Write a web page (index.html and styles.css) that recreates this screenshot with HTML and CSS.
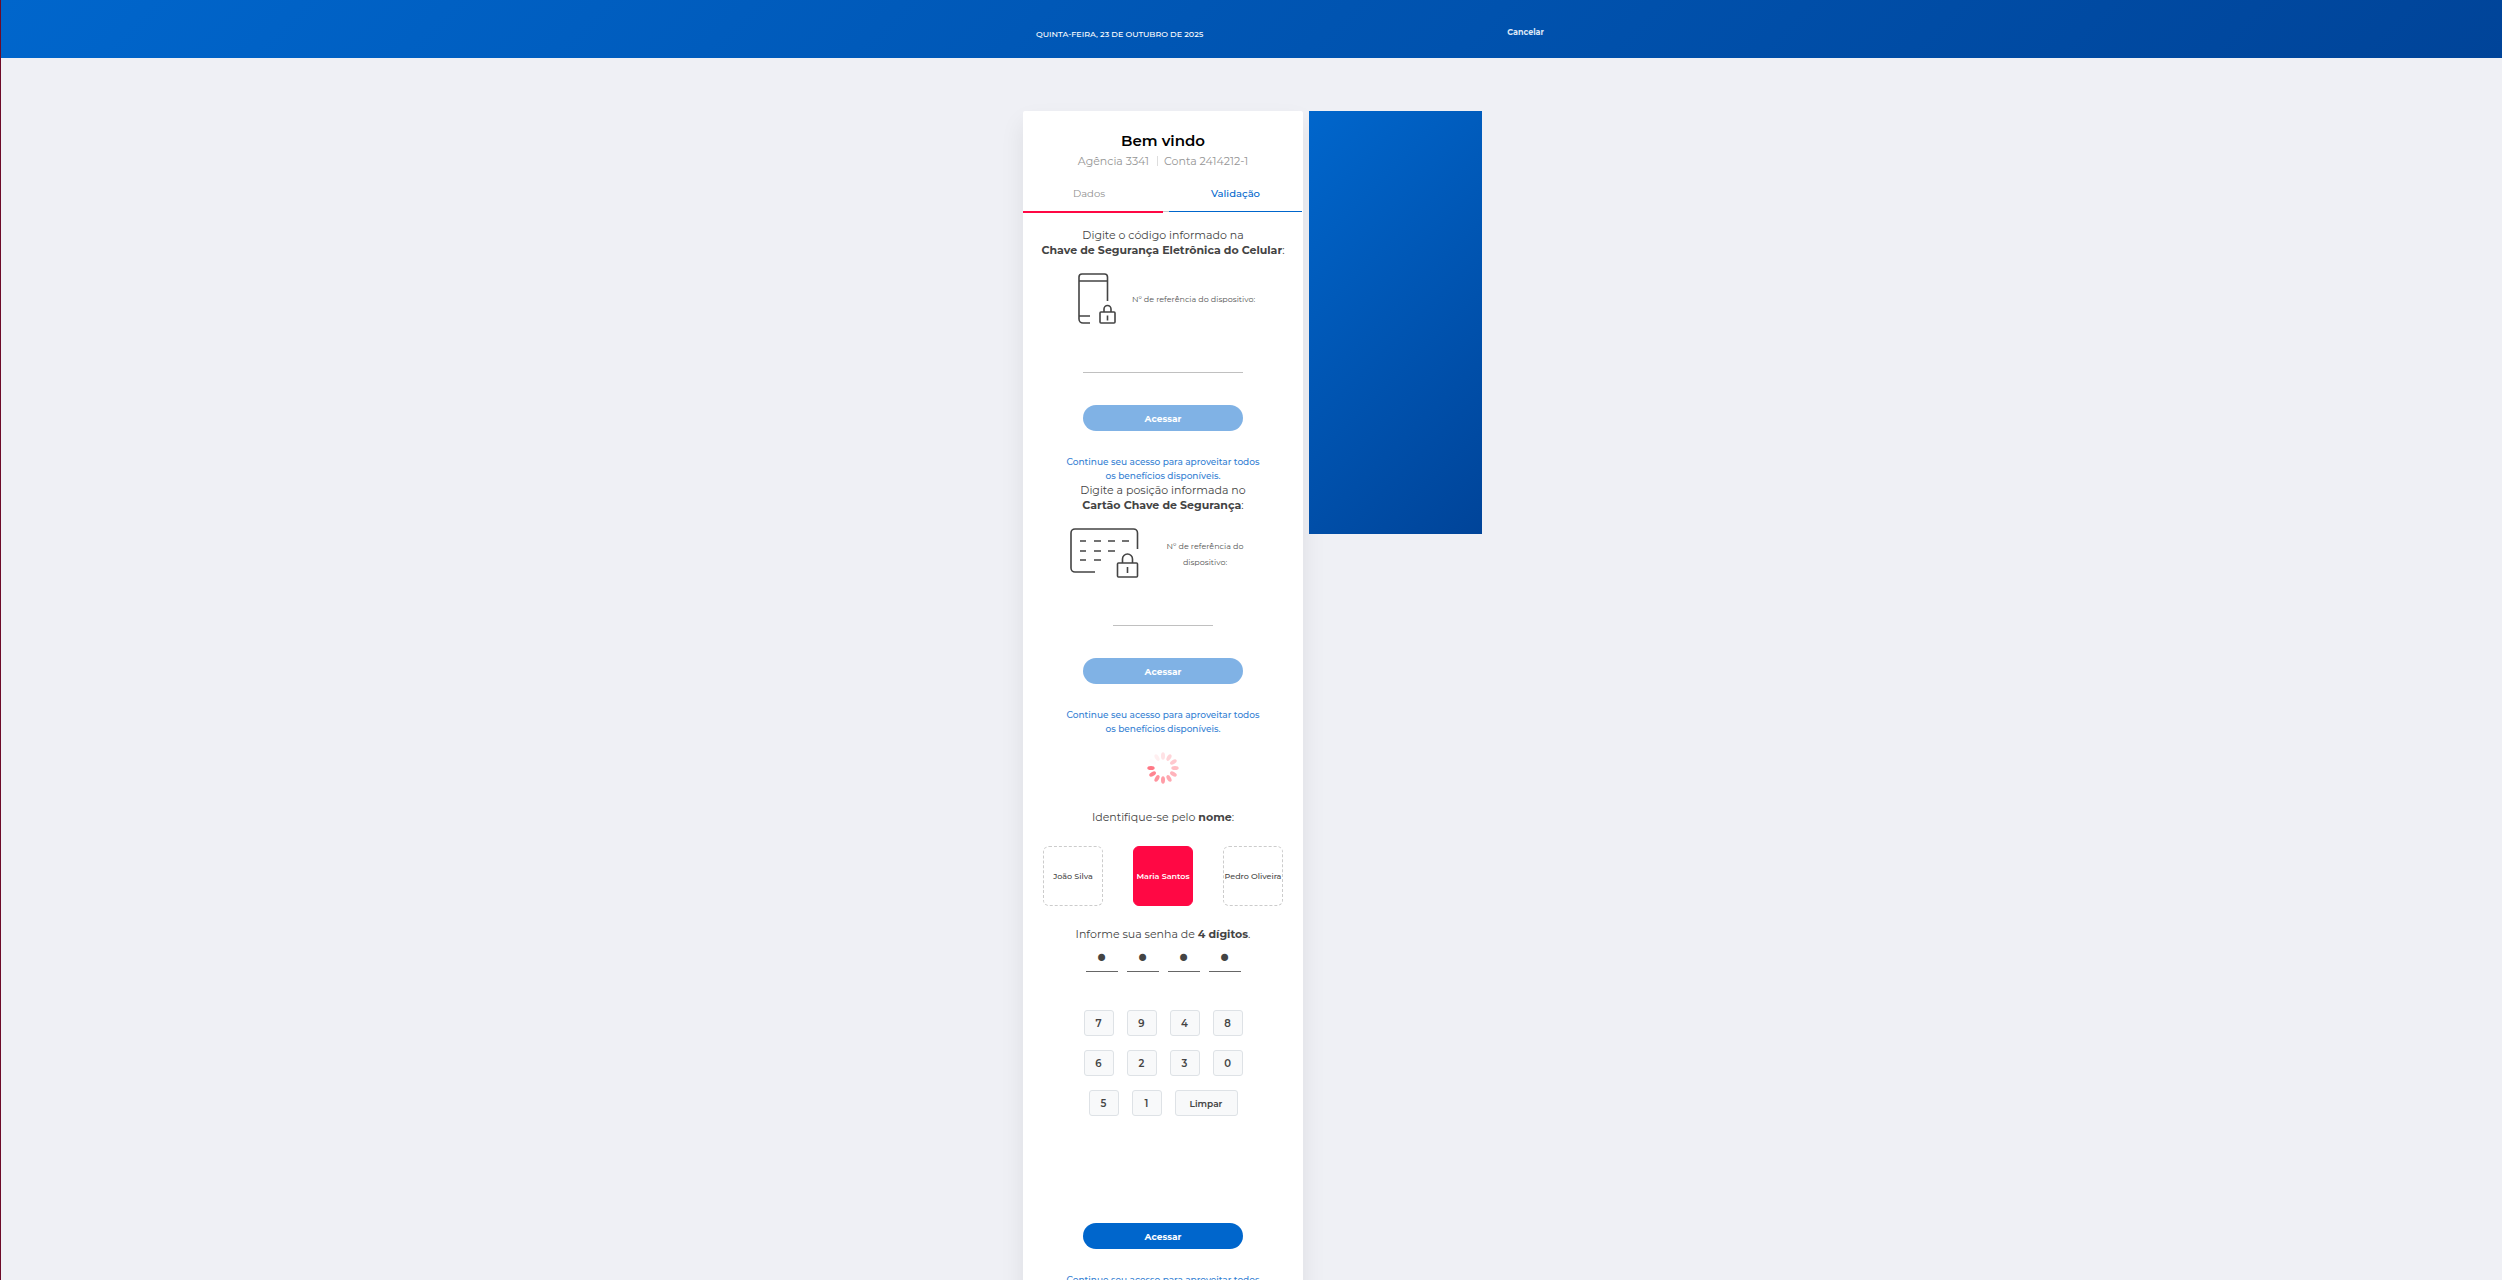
FILE: index.html
```html
<!DOCTYPE html>
<html lang="pt-BR">
<head>
<meta charset="utf-8">
<title>Validação de acesso</title>
<link rel="stylesheet" href="styles.css">
</head>
<body>
<header class="topbar">
  <div class="topbar-inner">
    <span class="date">QUINTA-FEIRA, 23 DE OUTUBRO DE 2025</span>
    <a class="cancel" href="#">Cancelar</a>
  </div>
</header>
<main class="page">
  <section class="card">
    <h1 class="title">Bem vindo</h1>
    <p class="account"><span>Agência 3341</span><span class="conta">Conta 2414212-1</span></p>
    <nav class="tabs">
      <a class="tab tab-done" href="#">Dados</a>
      <a class="tab tab-current" href="#">Validação</a>
    </nav>

    <form class="step">
      <p class="lead">Digite o código informado na<br><strong>Chave de Segurança Eletrônica do Celular</strong>:</p>
      <div class="device">
        <svg class="phone" width="40" height="54" viewBox="0 0 40 54" fill="none" stroke="#444" stroke-width="1.6">
          <path d="M30.500 29V5a3 3 0 0 0-3-3H5a3 3 0 0 0-3 3v42a4 4 0 0 0 4 4h7M2 9h28.500M2 44h11"/>
          <rect x="23" y="40" width="15" height="11" rx="1"/><path d="M27 40v-3a3.500 3.500 0 0 1 7 0v3M30.500 43.500v5"/>
        </svg>
        <label for="token">Nº de referência do dispositivo:</label>
      </div>
      <input class="field" id="token" type="text">
      <button class="submit" type="button" disabled>Acessar</button>
      <p class="hint">Continue seu acesso para aproveitar todos<br>os benefícios disponíveis.</p>
    </form>

    <form class="step step-card">
      <p class="lead">Digite a posição informada no<br><strong>Cartão Chave de Segurança</strong>:</p>
      <div class="device">
        <svg class="keycard" width="70" height="54" viewBox="0 0 70 54" fill="none" stroke="#444" stroke-width="1.6">
          <path d="M67.500 22V6a4 4 0 0 0-4-4H5a4 4 0 0 0-4 4v35a4 4 0 0 0 4 4h20M10 14h6M24 14h7M38 14h7M52 14h7M10 24h6M24 24h7M38 24h7M10 33h6M24 33h7"/>
          <rect x="47.500" y="36" width="20" height="14" rx="1"/><path d="M52.500 36v-4a5 5 0 0 1 10 0v4M57.500 40v6"/>
        </svg>
        <label for="position">Nº de referência do<br>dispositivo:</label>
      </div>
      <input class="field field-short" id="position" type="text">
      <button class="submit" type="button" disabled>Acessar</button>
      <p class="hint">Continue seu acesso para aproveitar todos<br>os benefícios disponíveis.</p>
    </form>

    <svg class="spinner" width="32" height="32" viewBox="-16 -16 32 32" fill="#ff4a5c">
      <ellipse cx="-12" rx="3.700" ry="2" opacity=".75"/>
      <ellipse cx="-12" rx="3.700" ry="2" opacity=".68" transform="rotate(-30)"/>
      <ellipse cx="-12" rx="3.700" ry="2" opacity=".6" transform="rotate(-60)"/>
      <ellipse cx="-12" rx="3.700" ry="2" opacity=".54" transform="rotate(-90)"/>
      <ellipse cx="-12" rx="3.700" ry="2" opacity=".48" transform="rotate(-120)"/>
      <ellipse cx="-12" rx="3.700" ry="2" opacity=".42" transform="rotate(-150)"/>
      <ellipse cx="-12" rx="3.700" ry="2" opacity=".36" transform="rotate(180)"/>
      <ellipse cx="-12" rx="3.700" ry="2" opacity=".3" transform="rotate(150)"/>
      <ellipse cx="-12" rx="3.700" ry="2" opacity=".24" transform="rotate(120)"/>
      <ellipse cx="-12" rx="3.700" ry="2" opacity=".16" transform="rotate(90)"/>
      <ellipse cx="-12" rx="3.700" ry="2" opacity=".09" transform="rotate(60)"/>
      <ellipse cx="-12" rx="3.700" ry="2" opacity=".02" transform="rotate(30)"/>
    </svg>

    <form class="step step-password">
      <p class="lead">Identifique-se pelo <strong>nome</strong>:</p>
      <div class="people">
        <button class="person" type="button">João Silva</button>
        <button class="person person-on" type="button">Maria Santos</button>
        <button class="person" type="button">Pedro Oliveira</button>
      </div>
      <p class="lead">Informe sua senha de <strong>4 dígitos</strong>.</p>
      <div class="digits">
        <input class="digit" type="password" value="7" maxlength="1" aria-label="Dígito 1">
        <input class="digit" type="password" value="7" maxlength="1" aria-label="Dígito 2">
        <input class="digit" type="password" value="7" maxlength="1" aria-label="Dígito 3">
        <input class="digit" type="password" value="7" maxlength="1" aria-label="Dígito 4">
      </div>
      <div class="keypad">
        <button class="key" type="button">7</button><button class="key" type="button">9</button><button class="key" type="button">4</button><button class="key" type="button">8</button>
        <button class="key" type="button">6</button><button class="key" type="button">2</button><button class="key" type="button">3</button><button class="key" type="button">0</button>
        <button class="key" type="button">5</button><button class="key" type="button">1</button><button class="key key-clear" type="button">Limpar</button>
      </div>
      <button class="submit" type="button">Acessar</button>
      <p class="hint">Continue seu acesso para aproveitar todos<br>os benefícios disponíveis.</p>
    </form>
  </section>
  <aside class="banner"></aside>
</main>
</body>
</html>
```
FILE: styles.css
```css
* { box-sizing: border-box; }
html { background: #eff0f5; }
body {
  margin: 0;
  border-left: 1px solid #6d0a28;
  font-family: Montserrat, Inter, sans-serif;
  font-size: 11px;
  color: #444;
}
p, h1 { margin: 0; }
a { text-decoration: none; }
button, input { font: inherit; color: inherit; padding: 0; }
strong { font-weight: 700; }

.topbar { background: linear-gradient(135deg, #0066cc, #004499); color: #fff; }
.topbar-inner {
  display: flex;
  justify-content: space-between;
  align-items: flex-start;
  max-width: 585px;
  min-height: 58px;
  margin: 0 auto;
  padding: 24px 0 12px 77px;
  font-size: 8px;
  line-height: 16px;
}
.date { padding-top: 2px; font-weight: 500; }
.cancel { color: #dbe7f6; font-weight: 700; }

.page {
  display: flex;
  justify-content: center;
  align-items: flex-start;
  gap: 6px;
  padding: 53px 0 0 2px;
}
.card {
  width: 280px;
  padding: 20px 0 40px;
  border-radius: 2px;
  background: #fff;
  box-shadow: 0 12px 24px rgba(0, 0, 0, .08);
  text-align: center;
}
.banner {
  position: relative;
  width: 173px;
  height: 423px;
  background: linear-gradient(135deg, #0066cc, #004499);
}

.title { font-size: 15px; line-height: 20px; font-weight: 600; color: #000; }
.account {
  display: flex;
  justify-content: center;
  gap: 8px;
  font-size: 11px;
  line-height: 20px;
  color: #959595;
}
.conta { display: flex; align-items: center; gap: 6px; }
.conta::before { content: ""; width: 1px; height: 10px; background: #ddd; }

.tabs {
  display: grid;
  grid-template-columns: 140px 133px;
  gap: 6px;
  margin-top: 12px;
  background: linear-gradient(#ccc, #ccc) 140px 28px / 6px 1px no-repeat;
}
.tab { height: 30px; font-size: 10px; line-height: 22px; }
.tab-done { padding-right: 8px; border-bottom: 2px solid #ff0844; color: #8f8f8f; }
.tab-current { height: 29px; border-bottom: 1px solid #0066cc; color: #0066cc; font-weight: 500; }

.step { display: flex; flex-direction: column; align-items: center; margin-top: 15px; }
.step-card { margin-top: 0; }
.lead { font-size: 11px; line-height: 15px; }
.device {
  display: flex;
  align-items: center;
  gap: 15px;
  margin-top: 14px;
  padding-left: 6px;
  font-size: 8px;
  line-height: 16px;
  color: #555;
}
.step-card .device { gap: 27px; padding: 0 13px 0 0; }
.field {
  width: 160px;
  height: 24px;
  margin-top: 23px;
  border: 0;
  border-bottom: 1px solid #c0c0c0;
  background: none;
  text-align: center;
}
.field-short { width: 100px; margin-top: 21px; }
.submit {
  width: 160px;
  height: 26px;
  margin-top: 32px;
  border: 0;
  border-radius: 13px;
  background: #0066cc;
  color: #fff;
  font-size: 9px;
  font-weight: 700;
}
.submit:disabled { background: #80b2e5; }
.hint { margin-top: 24px; font-size: 9px; line-height: 14px; font-weight: 500; color: #3380d3; }

.spinner { display: block; margin: 16px auto 0; }

.step-password { margin-top: 26px; }
.people { display: flex; gap: 30px; margin: 21px 0; }
.person {
  width: 60px;
  height: 60px;
  border: 1px dashed #ccc;
  border-radius: 6px;
  background: #fff;
  font-size: 8px;
  font-weight: 500;
  white-space: nowrap;
}
.person-on { border-color: #ff0844; border-style: solid; background: #ff0844; color: #fff; font-weight: 600; }
.digits { display: flex; gap: 9px; margin-top: 5px; }
.digit {
  width: 32px;
  height: 25px;
  border: 0;
  border-bottom: 1px solid #666;
  background: none;
  text-align: center;
  font-family: "DejaVu Sans", sans-serif;
  font-size: 24px;
}
.keypad {
  display: flex;
  flex-wrap: wrap;
  justify-content: center;
  gap: 14px 13px;
  width: 160px;
  margin: 38px 0 75px;
}
.key {
  width: 30px;
  height: 26px;
  border: 1px solid #dee2e6;
  border-radius: 3px;
  background: #f8f9fa;
  font-size: 10px;
  font-weight: 600;
}
.key-clear { width: 63px; font-size: 9px; }
```
